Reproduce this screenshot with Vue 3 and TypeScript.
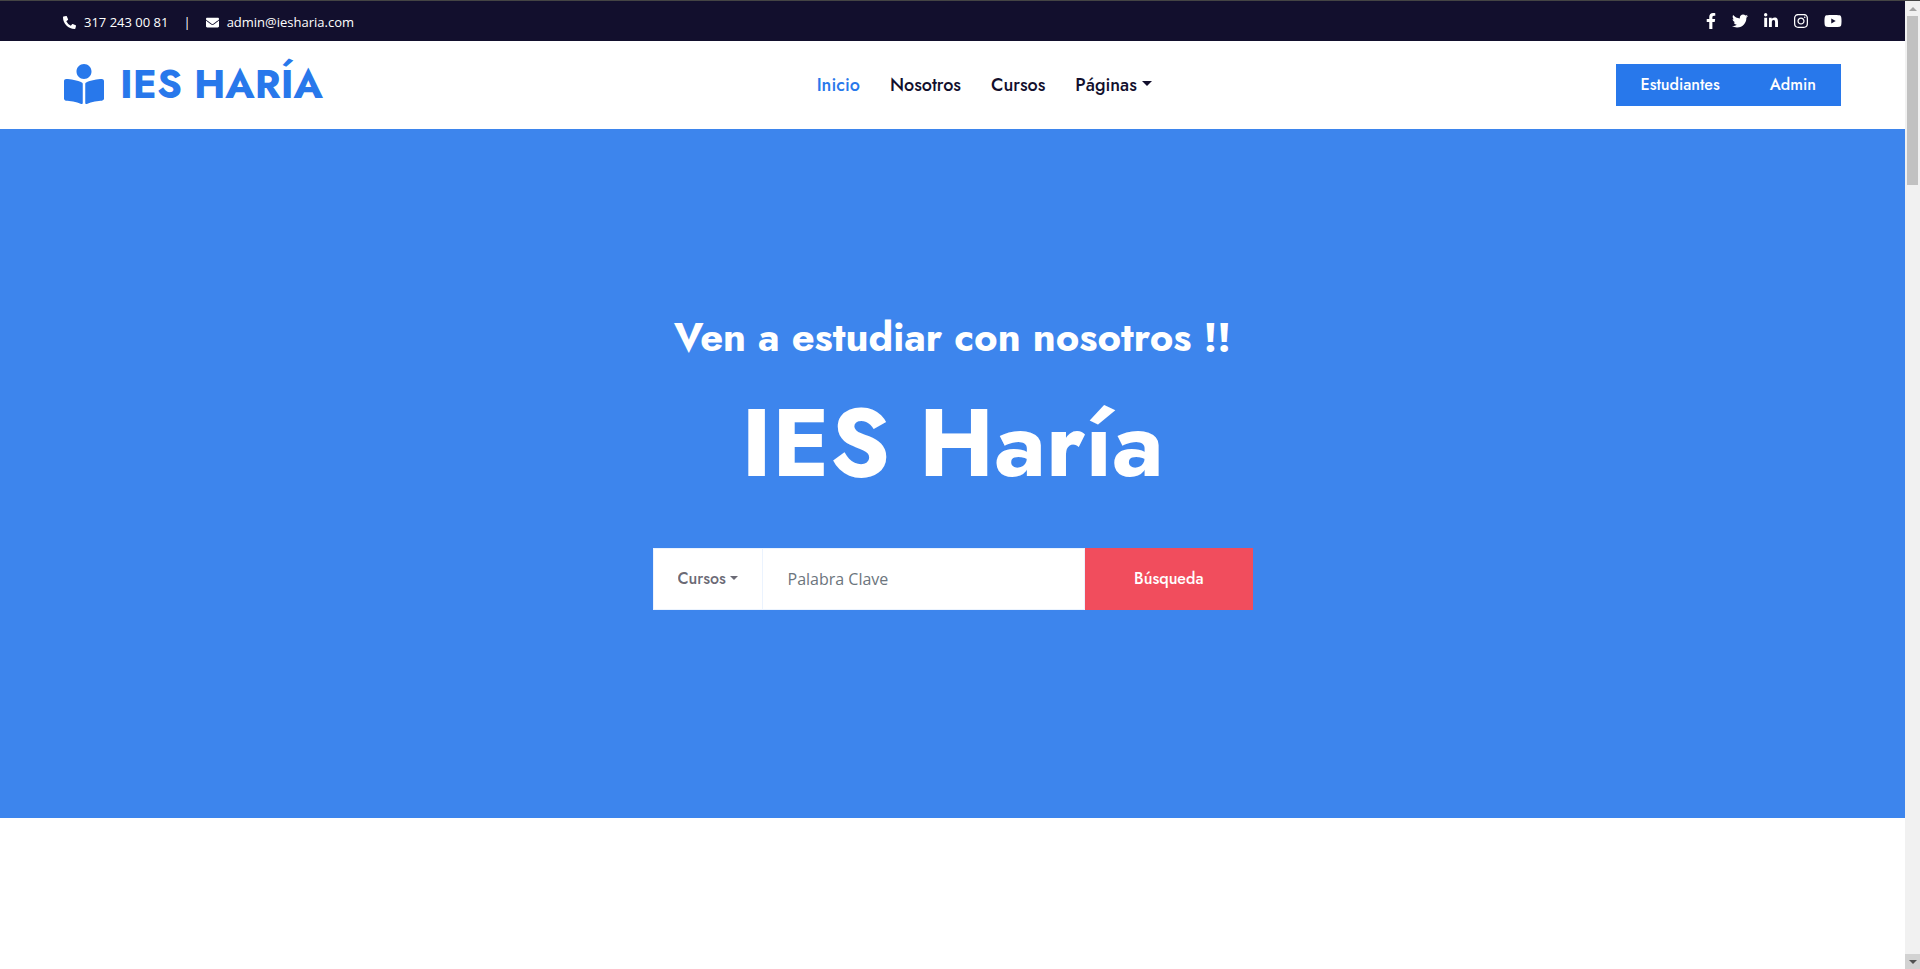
<script setup lang="ts">
import { ref } from 'vue'

interface Icon {
  name: string
  width: number
  path: string
}

const keyword = ref('')
const category = ref('Cursos')

const socials: Icon[] = [
  { name: 'Facebook', width: 320, path: 'M279.14 288l14.22-92.66h-88.91v-60.13c0-25.35 12.42-50.06 52.24-50.06h40.42V6.26S260.43 0 225.36 0c-73.22 0-121.08 44.38-121.08 124.72v70.62H22.89V288h81.39v224h100.17V288z' },
  { name: 'Twitter', width: 512, path: 'M459.37 151.716c.325 4.548.325 9.097.325 13.645 0 138.72-105.583 298.558-298.558 298.558-59.452 0-114.68-17.219-161.137-47.106 8.447.974 16.568 1.299 25.34 1.299 49.055 0 94.213-16.568 130.274-44.832-46.132-.975-84.792-31.188-98.112-72.772 6.498.974 12.995 1.624 19.818 1.624 9.421 0 18.843-1.3 27.614-3.573-48.081-9.747-84.143-51.98-84.143-102.985v-1.299c13.969 7.797 30.214 12.67 47.431 13.319-28.264-18.843-46.781-51.005-46.781-87.391 0-19.492 5.197-37.36 14.294-52.954 51.655 63.675 129.3 105.258 216.365 109.807-1.624-7.797-2.599-15.918-2.599-24.04 0-57.828 46.782-104.934 104.934-104.934 30.213 0 57.502 12.67 76.67 33.137 23.715-4.548 46.456-13.32 66.599-25.34-7.798 24.366-24.366 44.833-46.132 57.827 21.117-2.273 41.584-8.122 60.426-16.243-14.292 20.791-32.161 39.308-52.628 54.253z' },
  { name: 'LinkedIn', width: 448, path: 'M100.28 448H7.4V148.9h92.88zM53.79 108.1C24.09 108.1 0 83.5 0 53.8a53.79 53.79 0 0 1 107.58 0c0 29.7-24.1 54.3-53.79 54.3zM447.9 448h-92.68V302.4c0-34.7-.7-79.2-48.29-79.2-48.29 0-55.69 37.7-55.69 76.7V448h-92.78V148.9h89.08v40.8h1.3c12.4-23.5 42.69-48.3 87.88-48.3 94 0 111.28 61.9 111.28 142.3V448z' },
  { name: 'Instagram', width: 448, path: 'M224.1 141c-63.6 0-114.9 51.3-114.9 114.9s51.3 114.9 114.9 114.9S339 319.5 339 255.9 287.7 141 224.1 141zm0 189.6c-41.1 0-74.7-33.5-74.7-74.7s33.5-74.7 74.7-74.7 74.7 33.5 74.7 74.7-33.6 74.7-74.7 74.7zm146.4-194.3c0 14.9-12 26.8-26.8 26.8-14.9 0-26.8-12-26.8-26.8s12-26.8 26.8-26.8 26.8 12 26.8 26.8zm76.1 27.2c-1.7-35.9-9.9-67.7-36.2-93.9-26.2-26.2-58-34.4-93.9-36.2-37-2.1-147.9-2.1-184.9 0-35.8 1.7-67.6 9.9-93.9 36.1s-34.4 58-36.2 93.9c-2.1 37-2.1 147.9 0 184.9 1.7 35.9 9.9 67.7 36.2 93.9s58 34.4 93.9 36.2c37 2.1 147.9 2.1 184.9 0 35.9-1.7 67.7-9.9 93.9-36.2 26.2-26.2 34.4-58 36.2-93.9 2.1-37 2.1-147.8 0-184.8zM398.8 388c-7.8 19.6-22.9 34.7-42.6 42.6-29.5 11.7-99.5 9-132.1 9s-102.7 2.6-132.1-9c-19.6-7.8-34.7-22.9-42.6-42.6-11.7-29.5-9-99.5-9-132.1s-2.6-102.7 9-132.1c7.8-19.6 22.9-34.7 42.6-42.6 29.5-11.7 99.5-9 132.1-9s102.7-2.6 132.1 9c19.6 7.8 34.7 22.9 42.6 42.6 11.7 29.5 9 99.5 9 132.1s2.7 102.7-9 132.1z' },
  { name: 'YouTube', width: 576, path: 'M549.655 124.083c-6.281-23.65-24.787-42.276-48.284-48.597C458.781 64 288 64 288 64S117.22 64 74.629 75.486c-23.497 6.322-42.003 24.947-48.284 48.597-11.412 42.867-11.412 132.305-11.412 132.305s0 89.438 11.412 132.305c6.281 23.65 24.787 41.5 48.284 47.821C117.22 448 288 448 288 448s170.78 0 213.371-11.486c23.497-6.321 42.003-24.171 48.284-47.821 11.412-42.867 11.412-132.305 11.412-132.305s0-89.438-11.412-132.305zm-317.51 213.508V175.185l142.739 81.205-142.739 81.201z' },
]

const links = [
  { label: 'Inicio', active: true, menu: false },
  { label: 'Nosotros', active: false, menu: false },
  { label: 'Cursos', active: false, menu: false },
  { label: 'Páginas', active: false, menu: true },
]
</script>

<template>
  <div class="window">
    <div class="page">
      <div class="topbar">
        <div class="contact">
          <a href="tel:3172430081" class="contact-item">
            <svg class="contact-icon" viewBox="0 0 512 512" aria-hidden="true">
              <path d="M497.39 361.8l-112-48a24 24 0 0 0-28 6.9l-49.6 60.6A370.66 370.66 0 0 1 130.6 204.11l60.6-49.6a23.94 23.94 0 0 0 6.9-28l-48-112A24.16 24.16 0 0 0 122.6.61l-104 24A24 24 0 0 0 0 48c0 256.5 207.9 464 464 464a24 24 0 0 0 23.4-18.6l24-104a24.29 24.29 0 0 0-14.01-27.6z" />
            </svg>
            <span>317 243 00 81</span>
          </a>
          <span class="divider">|</span>
          <a href="mailto:admin@iesharia.com" class="contact-item">
            <svg class="contact-icon" viewBox="0 0 512 512" aria-hidden="true">
              <path d="M502.3 190.8c3.9-3.1 9.7-.2 9.7 4.7V400c0 26.5-21.5 48-48 48H48c-26.5 0-48-21.5-48-48V195.6c0-5 5.7-7.8 9.7-4.7 22.4 17.4 52.1 39.5 154.1 113.6 21.1 15.4 56.7 47.8 92.2 47.6 35.7.3 72-32.8 92.3-47.6 102-74.1 131.6-96.3 154-113.7zM256 320c23.2.4 56.6-29.2 73.4-41.4 132.7-96.3 142.8-104.7 173.4-128.7 5.8-4.5 9.2-11.5 9.2-18.9v-19c0-26.5-21.5-48-48-48H48c-26.5 0-48 21.5-48 48v19c0 7.4 3.4 14.3 9.2 18.9 30.6 23.9 40.7 32.4 173.4 128.7 16.8 12.2 50.2 41.8 73.4 41.4z" />
            </svg>
            <span>admin@iesharia.com</span>
          </a>
        </div>
        <div class="socials">
          <a v-for="s in socials" :key="s.name" href="#" :aria-label="s.name">
            <svg class="social-icon" :viewBox="`0 0 ${s.width} 512`" aria-hidden="true">
              <path :d="s.path" />
            </svg>
          </a>
        </div>
      </div>

      <header class="navbar">
        <a href="#" class="brand">
          <svg class="brand-icon" viewBox="0 0 512 512" aria-hidden="true">
            <path d="M352 96c0-53.02-42.98-96-96-96s-96 42.98-96 96 42.98 96 96 96 96-42.98 96-96zM233.59 241.1c-59.33-36.32-155.43-46.3-203.79-49.05C13.55 191.13 0 203.51 0 219.14v222.8c0 14.33 11.59 26.28 26.49 27.05 43.66 2.29 131.99 10.68 193.04 41.43 9.37 4.72 20.48-1.71 20.48-11.87V252.56c-.01-4.67-2.32-8.95-6.42-11.46zm248.61-49.05c-48.35 2.74-144.46 12.73-203.78 49.05-4.1 2.51-6.41 6.96-6.41 11.63v245.79c0 10.19 11.14 16.63 20.54 11.9 61.04-30.72 149.32-39.11 192.97-41.4 14.9-.78 26.49-12.73 26.49-27.06V219.14c-.01-15.63-13.56-28.01-29.81-27.09z" />
          </svg>
          <span>IES HARÍA</span>
        </a>
        <nav class="links">
          <a v-for="l in links" :key="l.label" href="#" :class="{ active: l.active }">
            {{ l.label }}<span v-if="l.menu" class="caret"></span>
          </a>
        </nav>
        <div class="access">
          <a href="#">Estudiantes</a>
          <a href="#">Admin</a>
        </div>
      </header>

      <main class="hero">
        <h2>Ven a estudiar con nosotros !!</h2>
        <h1>IES Haría</h1>
        <form class="search" @submit.prevent>
          <div class="category">
            <select v-model="category" aria-label="Categoría">
              <option>Cursos</option>
            </select>
            <span class="caret"></span>
          </div>
          <input v-model="keyword" type="text" placeholder="Palabra Clave" aria-label="Palabra Clave" />
          <button type="submit">Búsqueda</button>
        </form>
      </main>
    </div>

    <div class="scrollbar" aria-hidden="true">
      <span class="step up"></span>
      <span class="track"><span class="thumb"></span></span>
      <span class="step down"></span>
    </div>
  </div>
</template>

<style>
body {
  margin: 0;
  background: #fff;
}
</style>

<style scoped>
* {
  box-sizing: border-box;
}

.window {
  --blue: #2878eb;
  --dark: #120f2d;
  --heading: Jost, Lato, "Open Sans", sans-serif;
  --body: "Open Sans", "Noto Sans", sans-serif;
  display: flex;
  min-height: 100vh;
  font-family: var(--body);
}

a {
  color: inherit;
  text-decoration: none;
}

svg {
  display: block;
  fill: currentColor;
}

.page {
  flex: 1;
  min-width: 0;
}

.topbar {
  display: flex;
  align-items: center;
  justify-content: space-between;
  height: 41px;
  padding: 0 63px;
  border-top: 1px solid #444;
  background: var(--dark);
  color: #fff;
  font-size: 13px;
}

.contact,
.contact-item,
.socials {
  display: flex;
  align-items: center;
}

.contact {
  gap: 15px;
  padding-top: 2px;
}

.contact-item {
  gap: 8px;
}

.contact-icon {
  width: 13px;
  height: 13px;
}

.socials {
  gap: 16px;
}

.social-icon {
  height: 16px;
}

.navbar {
  display: flex;
  align-items: center;
  justify-content: space-between;
  height: 88px;
  padding: 0 64px;
  background: #fff;
  font-family: var(--heading);
}

.brand {
  display: flex;
  align-items: center;
  gap: 16px;
  margin-right: 30px;
  padding-bottom: 2px;
  color: var(--blue);
  font-size: 40px;
  line-height: 48px;
  font-weight: 700;
}

.brand-icon {
  width: 40px;
  height: 40px;
}

.links {
  display: flex;
}

.links a {
  display: flex;
  align-items: center;
  padding: 0 15px;
  color: var(--dark);
  font-size: 18px;
  font-weight: 500;
}

.links a.active {
  color: var(--blue);
}

.caret {
  margin: 0 0 3px 5px;
  border: 5px solid transparent;
  border-top-color: currentColor;
  border-bottom: 0;
}

.access {
  display: flex;
  background: var(--blue);
  color: #fff;
  font-size: 16px;
  font-weight: 500;
  line-height: 24px;
}

.access a {
  padding: 9px 25px;
}

.hero {
  display: flex;
  flex-direction: column;
  align-items: center;
  padding: 184px 24px 208px;
  background: #3d85ed;
  color: #fff;
  font-family: var(--heading);
}

h1,
h2 {
  margin: 0;
  font-weight: 700;
  text-align: center;
}

h2 {
  margin-bottom: 24px;
  font-size: 40px;
  line-height: 48px;
}

h1 {
  margin-bottom: 48px;
  font-size: 96px;
  line-height: 115px;
}

.search {
  display: flex;
  width: 100%;
  max-width: 600px;
  height: 62px;
}

.category {
  position: relative;
  display: flex;
  align-items: center;
  background: #fff;
  border: 1px solid #ebf3fe;
  color: #6b6a75;
}

.category select {
  appearance: none;
  height: 100%;
  padding: 0 35px 2px 24px;
  border: 0;
  border-radius: 0;
  background: transparent;
  color: inherit;
  font: 500 16px var(--heading);
}

.category .caret {
  position: absolute;
  right: 24px;
  border-width: 4px;
  border-bottom-width: 0;
  pointer-events: none;
}

.search input {
  flex: 1;
  min-width: 0;
  padding: 0 25px;
  border: 1px solid #ebf3fe;
  border-left: 0;
  border-radius: 0;
  background: #fff;
  color: #6b6a75;
  font: 16px var(--body);
}

.search input::placeholder {
  color: #6c757d;
}

.search button {
  padding: 0 49px 2px;
  border: 0;
  background: #f14d5d;
  color: #fff;
  font: 500 16px var(--heading);
}

.scrollbar {
  display: flex;
  flex-direction: column;
  width: 15px;
  border-top: 1px solid #444;
  background: #f1f1f1;
}

.step {
  display: flex;
  align-items: center;
  justify-content: center;
  height: 15px;
}

.step::after {
  content: "";
  border: 4px solid transparent;
}

.up::after {
  border-top: 0;
  border-bottom-color: #a3a3a3;
}

.down {
  background: #d2d2d2;
}

.down::after {
  border-bottom: 0;
  border-top-color: #505050;
}

.track {
  flex: 1;
  padding: 0 2px;
}

.thumb {
  display: block;
  height: 18%;
  background: #c1c1c1;
}
</style>
